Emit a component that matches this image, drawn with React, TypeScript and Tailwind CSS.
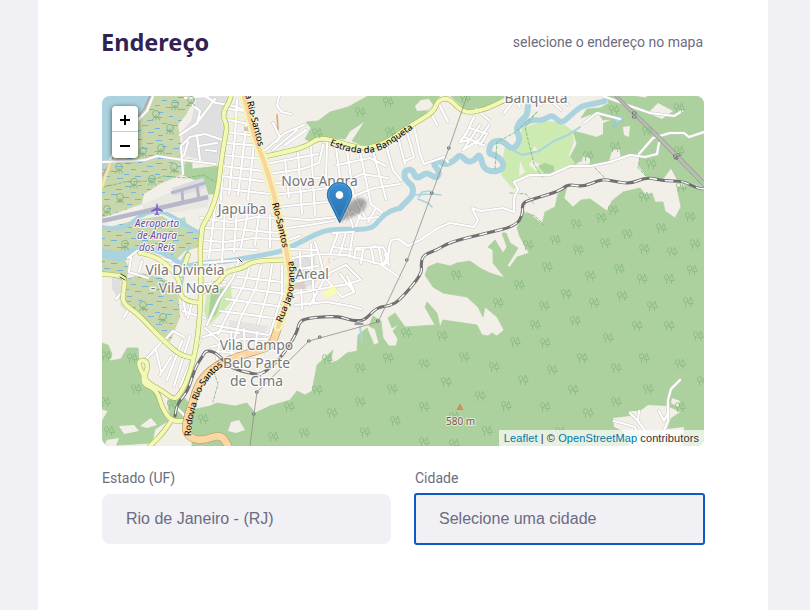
import React from "react";

const WOODS = [
  "M368 96 L348 107 L330 112 L318 121 L306 122 L311 128 L305 139 L312 142 L326 138 L345 139 L350 131 L365 121 L358 132 L352 141 L369 148 L388 140 L405 127 L425 114 L440 96Z",
  "M451 96 L466 110 L487 108 L505 96Z",
  "M607 96 L609 103 L600 108 L587 109 L581 118 L597 112 L603 120 L613 119 L600 125 L603 132 L596 137 L581 133 L573 131 L577 144 L570 157 L573 166 L580 161 L590 166 L610 163 L630 155 L640 155 L639 166 L647 177 L663 179 L671 168 L677 179 L690 183 L704 187 L704 96 L648 96 L645 98 L634 96Z",
  "M558 194 L567 186 L564 198 L573 207 L581 200 L590 199 L600 206 L607 211 L612 201 L623 192 L640 188 L646 195 L652 193 L655 202 L663 202 L665 211 L675 218 L681 207 L677 188 L690 185 L704 191 L704 446 L192 446 L192 410 L210 406 L217 403 L235 406 L247 403 L255 413 L270 406 L290 400 L297 391 L305 395 L312 391 L317 365 L333 350 L330 363 L337 361 L347 353 L357 351 L358 335 L367 328 L374 345 L379 343 L375 329 L369 326 L373 316 L381 321 L383 338 L389 346 L396 346 L398 339 L393 331 L399 324 L392 328 L388 318 L395 313 L405 327 L435 325 L425 307 L427 302 L437 313 L440 327 L443 320 L477 325 L482 335 L488 336 L492 333 L497 336 L504 330 L497 317 L485 307 L483 317 L478 307 L467 297 L443 293 L433 287 L425 275 L428 267 L437 263 L450 266 L457 263 L470 261 L480 268 L490 273 L505 278 L493 263 L493 250 L488 247 L495 240 L503 253 L507 247 L502 233 L506 233 L510 243 L518 248 L515 253 L507 266 L510 267 L517 257 L529 253 L520 237 L517 228 L524 213 L531 215 L542 224 L545 212 L555 207Z",
  "M102 343 L108 345 L112 354 L109 361 L121 359 L127 348 L138 348 L139 362 L142 383 L155 392 L161 408 L168 421 L155 429 L152 443 L102 446 L102 421 L108 411 L102 409Z",
  "M168 400 L185 398 L190 405 L184 420 L170 418Z",
  "M186 160 L192 160 L192 169 L219 166 L217 194 L208 194 L205 184 L183 175Z",
];

const MARSH = [
  "M150 96 L196 96 L186 115 L178 125 L181 144 L183 174 L160 184 L144 194 L142 204 L102 218 L102 168 L112 158 L135 110Z",
  "M102 229 L136 220 L162 216 L178 225 L200 232 L200 247 L185 251 L174 262 L153 250 L135 249 L122 253 L128 266 L127 281 L102 274Z",
  "M127 279 L143 273 L160 277 L178 286 L180 317 L170 342 L156 330 L132 310 L125 301Z",
];

const STREETS = [
  "M102 162 L130 161 L145 160 L157 156 L183 160 L215 164",
  "M153 96 L147 111 L138 120 M185 98 L208 96 M180 135 L196 124 L206 111 L215 99 M192 105 L200 111 L197 124 M183 174 L181 146 L190 137 L205 134 L223 140 M205 96 L216 103 L230 105 L245 110",
  "M188 142 L184 156 M197 135 L200 160 M206 150 L216 151 M199 146 L217 143",
  "M228 109 L252 112 M229 120 L253 125 M227 132 L257 136 M226 143 L260 146 M223 155 L262 159 M222 166 L264 171 M221 176 L269 182 M220 188 L270 194 M226 108 L221 200 M237 100 L235 136 L229 194 M249 103 L243 153 L238 195 M255 134 L248 200",
  "M279 96 L277 106 L282 112 L291 114 M273 123 L280 137 L276 142 M262 153 L285 133 L304 125 M273 150 L297 130 M285 145 L306 130 M266 164 L286 160 L318 154 M268 174 L302 169 L319 163 L323 145 M271 184 L325 177 M274 195 L328 188 M277 207 L327 202",
  "M285 160 L289 197 M298 153 L302 213 M311 147 L315 215 M327 142 L326 180 M336 147 L342 194 L353 227 M347 150 L353 193 L365 217 M360 152 L371 204 L382 212 M373 151 L386 199 M386 145 L393 170 L401 180 M398 137 L405 164 M337 165 L370 158 L386 166 M342 183 L362 174 L388 178 M354 196 L374 188 L400 184",
  "M407 132 L414 157 L405 161 M414 126 L420 154 L424 164 L444 157 L448 162 M431 113 L437 125 M439 104 L448 122 M476 109 L489 120",
  "M474 117 L467 132 L460 142 L470 140 M480 125 L463 150 L479 140 L489 125 M470 128 L487 134 L480 145 M464 137 L484 145 M504 113 L515 99 L520 107 M530 96 L541 105 M550 100 L561 110",
  "M400 240 L408 246 L420 240 L438 228 L450 223 L474 227 L478 220 L472 208 L481 211 L503 208 L514 212 L514 198 L518 189 L514 182 L530 175 L550 175 L570 166 L591 166 L610 162 L630 155 L645 157 L657 154 L659 143 M639 154 L653 138 L670 133 L684 133 L689 137 L704 132",
  "M603 96 L630 106 L650 113 L674 116 L682 111 M584 123 L597 113 L620 119 M562 96 L568 105",
  "M201 218 L231 222 L257 217 L275 218 M202 228 L237 229 L279 233 M201 240 L225 242 L253 238 L281 239 M202 251 L231 249 L257 250 M201 263 L241 260 M202 273 L229 270 M203 284 L225 282",
  "M215 207 L209 258 M225 207 L222 262 M237 210 L234 252 M248 213 L241 247 M259 215 L255 245 M270 215 L270 247",
  "M239 260 L233 278 L219 299 L207 325 M250 265 L244 285 L228 314 L218 334 M261 266 L256 288 L240 319 L234 341 M272 265 L268 291 L258 324 M282 266 L282 295 L270 334 M238 277 L282 282 M232 287 L286 294 M226 299 L284 307 M220 311 L281 319 M213 325 L268 335",
  "M284 218 L309 220 L337 217 M287 228 L309 225 L333 221 M288 240 L300 236 M289 249 L318 250 M292 258 L319 254 L346 255 L380 264 L400 278 M293 270 L318 266 M294 282 L330 275 M294 294 L341 285 M295 305 L327 302 L350 306 L361 309 M315 242 L320 258 L325 278 L310 305 M300 252 L302 309 M311 244 L314 302",
  "M338 233 L330 254 M346 233 L339 256 M353 232 L349 257 M334 247 L352 250 M333 233 L354 232 M358 250 L376 246 M354 258 L356 248 L383 247 M363 250 L361 263 M371 248 L374 263 M379 248 L382 263 M385 254 L389 265 M383 247 L388 256 L383 265 L388 262 L389 248 L391 240 L398 239 L404 243 M344 222 L352 211 L363 219 L378 217",
  "M329 273 L346 265 L360 279 M326 279 L342 297 L354 292 L340 274 M340 286 L361 280 M347 276 L354 291 M356 226 L364 204 M368 222 L376 208",
  "M128 258 L137 251 L155 256 L171 261 M131 257 L129 272 L148 278 M142 261 L139 272 M150 271 L164 275",
  "M183 299 L186 315 M192 302 L188 318 M183 311 L205 318 M163 340 L151 354 L144 361 M163 342 L173 331 L184 337 M156 350 L161 371 M171 357 L160 375 M182 341 L167 380 M190 336 L174 386 M200 340 L180 387",
  "M205 328 L220 341 L217 359 M203 337 L221 331 L239 333 M211 347 L241 339 L267 339 M217 351 L239 354 M231 334 L232 358 M244 329 L245 355 M257 332 L255 354 M233 359 L256 360",
  "M124 290 L116 299 M130 307 L124 317 M178 409 L184 415",
  "M680 380 L671 389 L668 400 L668 421 L663 433 M659 411 L664 421 L668 413 M640 446 L635 427 L618 422 M618 422 L614 421 M640 445 L646 432 L638 421 L630 413 M638 421 L639 411 M649 438 L661 436 L669 430 M625 433 L635 438",
];

// Rounds every corner of a polyline by running quadratics between segment midpoints.
function smooth(path: string): string {
  return path
    .split("M")
    .filter((part) => part.trim())
    .map((part) => {
      const n = (part.match(/[\d.]+/g) ?? []).map(Number);
      let out = `M${n[0]} ${n[1]}`;
      for (let i = 2; i < n.length - 2; i += 2) {
        out += `Q${n[i]} ${n[i + 1]} ${(n[i] + n[i + 2]) / 2} ${(n[i + 1] + n[i + 3]) / 2}`;
      }
      return `${out}L${n[n.length - 2]} ${n[n.length - 1]}`;
    })
    .join("");
}

const MAJOR = smooth(
  "M231 94 L231 99 L222 114 L227 125 L226 133 L221 161 L218 191 L210 214 L202 227 L202 231 L200 247 L201 277 L200 318 L195 355 L187 381 L180 394 L174 400 L163 391 L148 383 L144 376 L148 368 L146 360 L138 361 L141 371 L144 375 L143 384 L157 390 L162 408 L171 421 L184 421 M171 421 L164 432 L150 446 M102 274 L117 275 L125 278 L124 288 L122 303 L137 313 L150 327 L166 343 L180 355 L193 358 M140 253 L153 255 L170 267 L180 281 L180 295 L187 301 L200 303 M188 255 L181 275 M201 293 L213 286 L221 280 L225 272 L243 268 L253 261 L285 260 M263 157 L290 151 L307 146 L318 138 L333 140 L347 145 L367 149 L387 142 L405 129 L422 119 L434 111 L438 100 L449 98 L458 108 L467 113 L487 109 L504 100 L517 96",
);
const HIGHWAY = smooth(
  "M243 92 L248 112 L255 139 L263 158 L270 181 L275 198 L278 215 L284 237 L288 260 L291 283 L286 306 L277 330 L272 346 L253 352 L233 358 L215 366 L199 381 L191 407 L185 426 L188 437 L202 441 L221 434 L228 446",
);
const HIGHWAY_URBAN = smooth(
  "M243 92 L248 112 L255 139 L263 158 L270 181 L275 198 L278 215 L284 237 L288 260 L291 283 L286 306 L278 327",
);
const RAIL = smooth(
  "M704 189 L696 188 L683 181 L663 181 L647 177 L630 184 L613 181 L602 179 L583 187 L568 184 L560 191 L533 199 L522 203 L523 214 L516 226 L487 233 L450 242 L437 250 L423 255 L421 264 L422 274 L400 300 L390 306 L377 307 L363 322 L350 320 L337 316 L307 318 L299 322 L297 333 L283 355 L270 368 L260 375 L250 373 L230 368 L217 353 L206 350 L202 357 L195 368 L188 391 L177 404 L175 416",
);
const RIVERS = {
  creek: smooth("M102 227 L114 229 L127 227 L139 216 L153 211 L164 212 L175 218 L190 228 L200 233"),
  lower: smooth("M102 252 L113 257 L129 251 L142 248 L160 251 L177 261 L185 267 L200 263 L223 262 L251 257 L280 252 L299 243 L322 231 L339 229 L371 230 L380 219 L389 211 L401 208"),
  upper: smooth("M400 208 L406 202 L413 195 L413 186 L405 180 L404 171 L412 169 L416 178 L420 177 L427 172 L436 179 L440 172 L433 164 L437 160 L445 165 L454 161 L460 154 L467 162 L474 161 L480 153 L483 168 L492 172 L502 170 L504 163 L496 155 L488 154 L491 142 L502 140 L511 149 L517 146 L520 138 L516 130 L520 121 L527 116 L528 106"),
  east: smooth("M517 128 L530 119 L543 121 L552 114 L561 124 L570 116 L581 106 L593 104 L605 101"),
};

const TREES: number[][] = [
  [360, 112], [388, 102], [317, 133], [390, 132], [465, 98], [614, 110], [679, 108], [647, 131], [679, 151],
  [588, 156], [615, 147], [651, 164], [681, 187], [613, 210], [644, 197], [576, 224], [601, 218],
  [661, 228], [690, 217], [528, 245], [547, 267], [519, 285], [498, 303], [544, 306], [456, 275],
  [555, 240], [578, 250], [605, 243], [627, 234], [644, 249], [672, 252], [695, 244], [590, 276],
  [619, 269], [642, 279], [669, 279], [692, 270], [566, 294], [594, 303], [622, 296], [652, 306],
  [688, 302], [575, 321], [608, 338], [637, 326], [669, 326], [698, 336], [535, 325], [515, 342],
  [545, 343], [442, 336], [424, 364], [464, 357], [494, 367], [552, 370], [582, 358], [616, 368],
  [644, 358], [680, 364], [446, 382], [523, 380], [480, 396], [506, 406], [545, 407], [573, 390],
  [588, 413], [616, 402], [648, 389], [680, 407], [424, 407], [454, 417], [487, 431], [424, 442],
  [360, 368], [388, 358], [317, 390], [392, 389], [360, 402], [332, 413], [395, 421], [304, 433],
  [273, 437], [365, 432], [289, 407], [106, 356], [132, 358], [136, 389], [105, 402], [109, 431],
  [172, 405], [203, 419], [560, 432], [524, 443], [454, 444], [702, 381], [327, 359], [406, 333],
];
const WET_TREES = [
  [156, 115], [175, 105], [191, 101], [170, 129], [143, 152], [161, 149], [119, 168],
  [152, 180], [174, 168], [134, 183], [120, 198], [107, 210], [125, 245], [143, 306], [163, 318], [162, 285],
];

const halo = { paintOrder: "stroke" as const };

function MapLabel({ x, y, children }: { x: number; y: number; children: string }) {
  return (
    <text
      x={x}
      y={y}
      textAnchor="middle"
      style={halo}
      className="fill-[#777777] stroke-white/80 stroke-[2.5px] font-['Noto_Sans',sans-serif] text-[13.9px]"
    >
      {children}
    </text>
  );
}

function CityMap() {
  return (
    <svg viewBox="102 96 602 350" className="block h-[350px] w-[602px]" strokeLinejoin="round" strokeLinecap="round">
      <defs>
        <g id="trees" fill="none" stroke="#8bba84" strokeWidth="0.9">
          <ellipse cx="-2.4" cy="-1.8" rx="2.1" ry="2.5" />
          <path d="M-2.4 .7V4.5M2.6 -4.4L.4 1.6H4.8ZM2.6 1.6V4.5" />
        </g>
        <g id="mangrove" fill="none" stroke="#88b684" strokeWidth="1">
          <circle cx="0" cy="-1.2" r="3.4" />
          <path d="M0 0V5M-3.6 5Q-3 2 0 2Q3 2 3.6 5" />
        </g>
        <pattern id="reeds" width="31" height="23" patternUnits="userSpaceOnUse">
          <path
            d="M1 2.5H7M14 1.5H18M23 5.5H29M7 8.5H12M18 10.5H24M0 13.5H5M11 15.5H17M24 17.5H30M3 20.5H8"
            stroke="#74b2df"
            strokeWidth="1"
            strokeLinecap="butt"
          />
        </pattern>
        <linearGradient id="pin" x1="0" y1="0" x2="0" y2="1">
          <stop offset="0" stopColor="#3b8fd0" />
          <stop offset="1" stopColor="#256fae" />
        </linearGradient>
        <filter id="soft" x="-30%" y="-30%" width="160%" height="160%">
          <feGaussianBlur stdDeviation="1.8" />
        </filter>
        <path id="road-north" d="M239 66 L253 122 L263 160" />
        <path id="road-mid" d="M274 203 L281 231 L286 254" />
        <path id="road-japo" d="M280 322 L289 299 Q295 284 290 250" />
        <path id="road-banq" d="M330 143 Q367 159 389 143 L418 123" />
        <path id="road-south" d="M188 436 Q188 421 194 403 Q200 380 220 364" />
      </defs>

      <path d="M102 96H704V446H102Z" fill="#f2efe9" />
      <g fill="#e0dfdf">
        <path d="M197 96 L229 96 L221 115 L224 135 L217 164 L185 156 L183 145 L181 132 L191 121Z" />
        <path d="M294 257 L315 257 L317 281 L305 288 L294 282Z" />
        <path d="M229 320 L269 326 L260 343 L230 341Z" opacity=".7" />
        <path d="M112 274 L121 280 L120 305 L129 315 L112 289Z" />
        <path d="M203 178 L216 177 L207 207 L183 210 L171 194Z" opacity=".6" />
      </g>
      <g fill="#c8d7ab">
        {MARSH.map((d) => (
          <path key={d} d={d} />
        ))}
      </g>
      <g fill="url(#reeds)">
        {MARSH.map((d) => (
          <path key={d} d={d} />
        ))}
      </g>
      <g fill="#add19e" stroke="#add19e" strokeWidth=".8">
        {WOODS.map((d) => (
          <path key={d} d={d} />
        ))}
      </g>
      <path
        d="M551 121 L540 122 L522 128 L518 143 L514 149 L505 146 L503 157 L503 168 L501 175 L507 182 L514 190 L518 181 L530 176 L550 173 L572 168 L575 163 L569 155 L574 142 L573 131 L565 125Z"
        fill="#cdebb0"
      />
      <path d="M520 161 L525 172 L519 176Z M532 160 L540 165 L536 171 L529 165Z M534 146 L538 150 L532 153Z" fill="#f2efe9" />
      <path d="M538 166 L545 163 L554 166 L554 173 L545 174Z" fill="#add19e" />
      <path d="M417 111 L415 106 L421 100 L429 99 L433 105 L428 110Z" fill="#f2efe9" />
      <path d="M207 290 L231 285 L232 301 L219 316 L209 325 L204 311Z" fill="#cdebb0" />
      <path d="M211 292 L225 288 L216 315 L208 320Z" fill="#add19e" />
      <path d="M178 219 L185 217 L187 228 L180 232Z" fill="#aae0cb" />
      <g fill="#f2efe9">
        <path d="M228 431 L231 422 L239 420 L245 430 L236 433Z M140 426 L151 418 L157 425 L147 428Z M119 426 L134 425 L139 431 L124 434Z M107 440 L119 438 L116 446 H104Z" />
        <path d="M613 418 L630 416 L629 411 L640 411 L648 405 L667 406 L680 412 L671 418 L667 429 L684 427 L682 446 L630 446 L623 431 L614 427Z M672 398 L680 401 L678 407 L671 403Z" />
        <path d="M623 127 L630 126 L629 137 L624 135Z M658 103 L673 111 L662 119 L648 113Z M584 122 L598 113 L603 122 L603 134 L596 137Z M612 151 L619 148 L621 159 L609 162Z M584 155 L591 159 L589 165 L581 163Z" />
      </g>

      <g fill="none" stroke="#aad3df">
        <path d={RIVERS.creek} strokeWidth="4" />
        <path d={RIVERS.lower} strokeWidth="5" />
        <path d="M102 253 L119 257 L129 254" strokeWidth="10" />
        <path d={RIVERS.upper} strokeWidth="6" />
        <path d={RIVERS.east} strokeWidth="5.5" />
        <path d="M513 150 L522 155 L539 151 L554 141 L568 135 L580 127" strokeWidth="2" />
        <path d="M413 195 L432 194 L441 195 M419 197 L422 192 L430 191 M418 199 L428 203 L432 207" strokeWidth="1.6" />
        <path d="M360 327 L362 342 M181 262 L190 247 M185 267 L182 284" strokeWidth="2" />
      </g>
      <path d="M102 96H151L143 109L120 137L109 160L102 170Z" fill="#aad3df" />
      <path d="M150 96 L144 109 L121 138 L113 158 L102 176" fill="none" stroke="#b4a8b8" strokeWidth="1.8" />
      <path d="M111 160L102 187" stroke="#fae4a0" strokeWidth="2.5" />
      <path d="M613 118 L619 116 L624 120 L617 124Z M614 124 L617 126 L613 127Z" fill="#aad3df" stroke="#8abfd2" strokeWidth=".7" />

      <path d="M171 192 L172 188 L203 178 L206 187 L209 196 L206 205 L180 212 L146 212 L142 205Z" fill="#e9e7e2" />
      <path d="M172 188 L203 178 L206 187 L198 191 L174 196Z" fill="#dcdbe2" />
      <g fill="none" stroke="#b8b7c9" strokeLinecap="butt">
        <path d="M102 221 L208 197" strokeWidth="4.6" />
        <path d="M171 193 L205 183 M182 190 L183 204 M197 185 L199 201" strokeWidth="3" />
      </g>

      <g stroke="#72b879" strokeWidth=".8" strokeDasharray="3 2" fill="none">
        <path d="M104 187 L125 182 L149 181 L164 176 L186 178 L204 175 L219 184" />
        <path d="M495 169 L497 142 L514 133 L537 112 M537 112 L525 127 L534 164 L543 178 M595 168 L604 177 M640 157 L638 168 L646 176 M214 372 L218 384 L213 402" />
        <path d="M522 211 L535 216 L544 225 M510 193 L526 194 L534 204" />
      </g>

      <g fill="none" stroke="#cbc9c8" strokeWidth="3.2">
        {STREETS.map((d) => (
          <path key={d} d={d} />
        ))}
      </g>
      <g fill="none" stroke="#ffffff" strokeWidth="2.2">
        {STREETS.map((d) => (
          <path key={d} d={d} />
        ))}
      </g>

      <path d="M231 119 L243 117" stroke="#f3f690" strokeWidth="1.5" />
      <path d="M244 127 L252 126 L251 131 L244 131Z" fill="#d4c2b6" />
      <path d="M277 115 L278 129" stroke="#dfae7b" strokeWidth="1.8" />
      <path d="M322 294 L334 285 L338 292 L327 298Z" fill="#f7fcb0" />
      <path d="M329 259h.1M334 259h.1M329 262h.1" stroke="#ee8a82" strokeWidth="1.2" />
      <path d="M287 285 L304 281 L306 289 L294 289Z" fill="#d9d0c9" />

      <path d={MAJOR} fill="none" stroke="#a9b45c" strokeWidth="5.2" />
      <path d={MAJOR} fill="none" stroke="#f3f9b5" strokeWidth="4" />
      <path d={HIGHWAY} fill="none" stroke="#b89c57" strokeWidth="8" />
      <path d={HIGHWAY} fill="none" stroke="#fcd6a4" strokeWidth="6.8" />
      <path d={HIGHWAY_URBAN} fill="none" stroke="#f3f9b5" strokeWidth="8.6" />
      <path d={HIGHWAY_URBAN} fill="none" stroke="#fbd3a0" strokeWidth="4.4" />

      <path d={RAIL} fill="none" stroke="#707070" strokeWidth="3.1" />
      <path d={RAIL} fill="none" stroke="#ffffff" strokeWidth="1.3" strokeDasharray="8 8" strokeLinecap="butt" />
      <path d="M355 320H363M355 324H363M121 274L126 277M120 277L125 280M239 259L242 262" stroke="#444444" strokeWidth="1" />

      <g fill="none" stroke="#8f8f8c" strokeWidth=".8">
        <path d="M467 96 L449 148 L432 193 L407 261 L378 322 L320 338 L309 341 L257 392 L254 414 L250 446" />
      </g>
      <path d="M616 96 L656 135 L706 185" stroke="#b9bdb4" strokeWidth="4" />
      <path d="M614.500 96 L654.500 136 L704 187 M617.500 96 L658 134 L704 181" fill="none" stroke="#8f938c" strokeWidth=".8" />
      <g fill="#eeeeee" stroke="#666666" strokeWidth=".9">
        {[[449, 148], [432, 193], [407, 260], [378, 321], [320, 337], [309, 341], [257, 392], [254, 414]].map(([x, y]) => (
          <path key={x} d={`M${x - 1} ${y - 1}h2v2h-2Z`} />
        ))}
        <path d="M633 112h3v2h-3ZM633 116h3v2h-3ZM674 155h3v2h-3ZM677 154h3v2h-3ZM675 158h3v1h-3Z" />
      </g>

      {TREES.map(([x, y], i) => (
        <use key={i} href="#trees" x={x} y={y} />
      ))}
      {WET_TREES.map(([x, y], i) => (
        <use key={i} href="#mangrove" x={x} y={y} />
      ))}

      <MapLabel x={319.5} y={186}>Nova Angra</MapLabel>
      <MapLabel x={242} y={214}>Japuíba</MapLabel>
      <MapLabel x={312} y={279}>Areal</MapLabel>
      <MapLabel x={185} y={275}>Vila Divinéia</MapLabel>
      <MapLabel x={185} y={293}>- Vila Nova</MapLabel>
      <MapLabel x={256.5} y={350}>Vila Campo</MapLabel>
      <MapLabel x={256.5} y={368}>Belo Parte</MapLabel>
      <MapLabel x={256.5} y={386}>de Cima</MapLabel>
      <MapLabel x={536} y={103}>Banqueta</MapLabel>

      <g
        textAnchor="middle"
        style={halo}
        className="fill-[#6b4ca5] stroke-white/80 stroke-[2px] font-['Noto_Sans',sans-serif] text-[10px] italic"
      >
        <text x="157" y="227">Aeroporto</text>
        <text x="157" y="239">de Angra</text>
        <text x="157" y="250.500">dos Reis</text>
      </g>
      <path
        d="M156.2 204.5q.8-1.8 1.6 0v3l5 3v1.4l-5-1.4v2.5l1.5 1.2v1l-2.3-.5-2.3.5v-1l1.5-1.2v-2.5l-5 1.4v-1.4l5-3Z"
        fill="#8461c4"
      />
      <path d="M460 403.5L463.7 410H456.3Z" fill="#d08f55" />
      <text x="460.5" y="425" textAnchor="middle" style={halo} className="fill-[#83563b] stroke-white/60 stroke-[2px] font-['Noto_Sans',sans-serif] text-[10px]">
        580 m
      </text>

      <g className="fill-black font-['Noto_Sans',sans-serif] text-[9.2px]">
        <text dy="1"><textPath href="#road-north">Rodovia Rio-Santos</textPath></text>
        <text dy="2"><textPath href="#road-mid">Rio-Santos</textPath></text>
        <text dy="2"><textPath href="#road-japo">Rua Japoranga</textPath></text>
        <text dy="2"><textPath href="#road-banq">Estrada da Banqueta</textPath></text>
        <text dy="3"><textPath href="#road-south">Rodovia Rio-Santos</textPath></text>
      </g>

      <path d="M340 222 L347 206 Q356 195 364 199 Q370 204 361 213Z" fill="#000000" opacity=".3" filter="url(#soft)" />
      <path
        d="M339.5 222.5 L329.2 201.5 Q327.3 198 327.3 194.5 A12.2 12 0 0 1 351.7 194.5 Q351.7 198 349.8 201.5Z"
        fill="url(#pin)"
        stroke="#2a6da5"
        strokeWidth="1"
      />
      <path d="M339.5 219 L330.4 200.6 Q328.6 197 328.6 194.5 A10.9 10.8 0 0 1 350.4 194.5 Q350.4 197 348.6 200.6Z" fill="none" stroke="#63a9dc" strokeWidth="1" opacity=".6" />
      <circle cx="339.5" cy="195" r="4.3" fill="#ffffff" stroke="#2a72ad" strokeWidth=".7" />
    </svg>
  );
}

export default function App() {
  return (
    <div className="h-[610px] w-[810px] overflow-hidden bg-[#f0f0f5] px-[38px] pr-[42px]">
      <main className="h-full bg-white px-16 pt-[26px] font-[Roboto,sans-serif] text-sm text-[#6c6c80]">
        <header className="flex h-8 items-center justify-between">
          <h2 className="-ml-px font-['Noto_Sans',sans-serif] text-[23.5px] font-bold leading-8 text-[#322153]">Endereço</h2>
          <span className="mr-px">selecione o endereço no mapa</span>
        </header>

        <section className="relative mt-[38px] h-[350px] w-[602px] overflow-hidden rounded-lg">
          <CityMap />
          <div className="absolute left-[10px] top-[10px] w-[26px] overflow-hidden rounded-[4px] bg-white text-black shadow-[0_1px_5px_rgba(0,0,0,0.65)]">
            <button className="flex h-[26px] w-full items-center justify-center border-b border-[#cccccc] pt-[3px]" aria-label="+">
              <svg className="size-3" viewBox="0 0 12 12"><path d="M6 1v10M1 6h10" stroke="currentColor" strokeWidth="2" /></svg>
            </button>
            <button className="flex h-[26px] w-full items-center justify-center pt-[2px]" aria-label="−">
              <svg className="size-3" viewBox="0 0 12 12"><path d="M1 6h10" stroke="currentColor" strokeWidth="2" /></svg>
            </button>
          </div>
          <div className="absolute bottom-0 right-0 bg-white/70 px-[5px] font-['Liberation_Sans',sans-serif] text-[11px] leading-4 tracking-[0.1px] text-[#333333]">
            <a className="text-[#0078a8]">Leaflet</a> | © <a className="text-[#0078a8]">OpenStreetMap</a> contributors
          </div>
        </section>

        <div className="mt-6 grid grid-cols-2 gap-6">
          <label className="flex flex-col gap-2">
            <span className="leading-4">Estado (UF)</span>
            <span className="flex h-[50px] items-center rounded-lg bg-[#f0f0f5] px-6 font-['Liberation_Sans',sans-serif] text-base">
              Rio de Janeiro - (RJ)
            </span>
          </label>
          <label className="flex flex-col gap-2">
            <span className="leading-4">Cidade</span>
            <span className="flex h-[50px] items-center rounded-[2px] bg-[#f0f0f5] px-6 font-['Liberation_Sans',sans-serif] text-base outline-2 -outline-offset-1 outline-[#0b5bc7]">
              Selecione uma cidade
            </span>
          </label>
        </div>
      </main>
    </div>
  );
}
